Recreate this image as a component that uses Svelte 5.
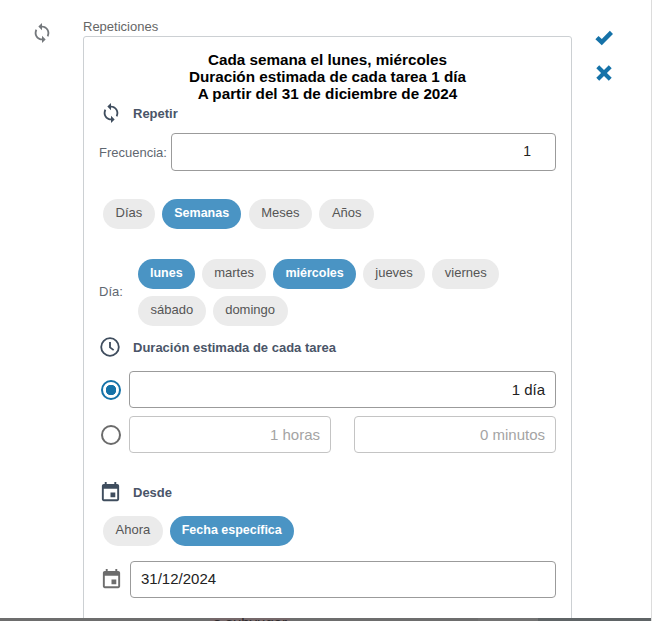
<script>
  const freq = ['Días', 'Semanas', 'Meses', 'Años'];
  const days = ['lunes', 'martes', 'miércoles', 'jueves', 'viernes', 'sábado', 'domingo'];
  const freqOn = 'Semanas';
  const daysOn = ['lunes', 'miércoles'];
  const syncPath = 'M12 4V1L8 5l4 4V6c3.31 0 6 2.69 6 6 0 1.01-.25 1.97-.7 2.8l1.46 1.46C19.54 15.03 20 13.57 20 12c0-4.42-3.58-8-8-8zm0 14c-3.31 0-6-2.69-6-6 0-1.01.25-1.97.7-2.8L5.24 7.74C4.46 8.97 4 10.43 4 12c0 4.42 3.58 8 8 8v3l4-4-4-4v3z';
  const calPath = 'M17 12h-5v5h5v-5zM16 1v2H8V1H6v2H5c-1.11 0-1.99.9-1.99 2L3 19c0 1.1.89 2 2 2h14c1.1 0 2-.9 2-2V5c0-1.1-.9-2-2-2h-1V1h-2zm3 18H5V8h14v11z';
</script>

<div class="page">
  <div class="side">
    <svg class="sync-side" viewBox="0 0 24 24"><path d={syncPath} /></svg>
  </div>

  <div class="main">
    <div class="label">Repeticiones</div>
    <div class="card">
      <div class="summary">
        <div>Cada semana el lunes, miércoles</div>
        <div>Duración estimada de cada tarea 1 día</div>
        <div>A partir del 31 de diciembre de 2024</div>
      </div>

      <div class="head repeat">
        <svg class="ico" viewBox="0 0 24 24"><path d={syncPath} /></svg>
        <span>Repetir</span>
      </div>
      <div class="row-freq">
        <span class="lbl">Frecuencia:</span>
        <div class="input right grow"><span class="one">1</span></div>
      </div>

      <div class="chips freq">
        {#each freq as f}
          <span class="chip" class:on={f === freqOn}>{f}</span>
        {/each}
      </div>

      <div class="row-days">
        <span class="lbl">Día:</span>
        <div class="chips wrap">
          {#each days as d}
            <span class="chip" class:on={daysOn.includes(d)}>{d}</span>
          {/each}
        </div>
      </div>

      <div class="head duration">
        <svg class="clock" viewBox="0 0 24 24" fill="none">
          <circle cx="12" cy="12" r="9.6" />
          <path d="M12 6.5V12.4L16 15.4" />
        </svg>
        <span>Duración estimada de cada tarea</span>
      </div>
      <div class="row-radio">
        <span class="radio on"></span>
        <div class="input right grow">1 día</div>
      </div>
      <div class="row-radio second">
        <span class="radio"></span>
        <div class="input right grow off">1 horas</div>
        <div class="input right grow off">0 minutos</div>
      </div>

      <div class="head since">
        <svg class="ico cal" viewBox="0 0 24 24"><path d={calPath} /></svg>
        <span>Desde</span>
      </div>
      <div class="chips from">
        <span class="chip">Ahora</span>
        <span class="chip on">Fecha específica</span>
      </div>
      <div class="row-date">
        <svg class="cal-grey" viewBox="0 0 24 24"><path d={calPath} /></svg>
        <div class="input grow">31/12/2024</div>
      </div>
    </div>
  </div>

  <div class="actions">
    <svg viewBox="0 0 24 24"><path d="M2.6 13.4 6 9.8l3.6 3.4L18.4 4.2l3.4 3.5L9.6 19.8z" /></svg>
    <svg viewBox="0 0 24 24"><path d="M6.8 3.6 12 8.8l5.2-5.2 3.2 3.2-5.2 5.2 5.2 5.2-3.2 3.2-5.2-5.2-5.2 5.2-3.2-3.2 5.2-5.2-5.2-5.2z" /></svg>
  </div>

  <div class="strip">
    <span class="seg a"></span>
    <span class="seg peek">o subyugar</span>
    <span class="seg b"></span>
    <span class="seg c"></span>
    <span class="seg d"></span>
  </div>
</div>

<style>
  :global(body) { margin: 0; background: #fff; }
  .page {
    position: relative;
    box-sizing: border-box;
    width: 652px;
    height: 621px;
    overflow: hidden;
    display: flex;
    border-right: 1px solid #dcdcdc;
    font-family: "Liberation Sans", Arial, sans-serif;
    font-size: 15px;
    color: #222;
  }
  .side { width: 83px; flex: none; }
  .sync-side { display: block; width: 22px; height: 22px; margin: 22px 0 0 31px; fill: #74787c; }
  .main { width: 489px; flex: none; padding-top: 19px; }
  .label { font-size: 13px; line-height: 16px; color: #666; height: 17px; }
  .card {
    box-sizing: border-box;
    height: 640px;
    border: 1px solid #ccd0d3;
    border-radius: 3px;
    padding: 14px 15px 0 15px;
  }
  .summary { font-weight: 700; font-size: 15.25px; line-height: 17px; color: #000; text-align: center; }
  .head { display: flex; align-items: center; font-weight: 700; font-size: 13px; color: #4a5568; }
  .head .ico { width: 22px; height: 22px; fill: #3f4d5e; margin-right: 11px; flex: none; }
  .repeat { margin: -1px 0 0 1px; height: 24px; }
  .row-freq { display: flex; align-items: center; margin-top: 8px; }
  .lbl { font-size: 13px; color: #5f6771; }
  .row-freq .lbl { margin-right: 4px; }
  .input {
    box-sizing: border-box;
    height: 37px;
    border: 1px solid #9b9b9b;
    border-radius: 4px;
    padding: 0 10px;
    display: flex;
    align-items: center;
    font-size: 15px;
    color: #222;
  }
  .row-freq .input { height: 38px; }
  .right { justify-content: flex-end; }
  .grow { flex: 1 1 0; min-width: 0; }
  .one { margin-right: 14px; margin-bottom: 3px; font-size: 14px; }
  .input.off { border-color: #c4c4c4; color: #a4a4a4; }
  .chips { display: flex; gap: 7px; }
  .chips.wrap { flex-wrap: wrap; row-gap: 7px; width: 405px; }
  .chip {
    box-sizing: border-box;
    height: 30px;
    line-height: 28px;
    padding: 0 12.5px;
    border-radius: 15px;
    background: #ebebeb;
    color: #555;
    font-size: 13px;
  }
  .chip.on { background: #4a94c4; color: #fff; font-weight: 700; font-size: 12.5px; padding: 0 12px; }
  .chips.freq { margin: 28px 0 0 4px; gap: 7.5px; }
  .row-days { display: flex; align-items: center; margin-top: 30px; }
  .row-days .lbl { width: 39px; flex: none; padding-bottom: 2px; }
  .duration { margin-top: 10px; height: 22px; }
  .clock { width: 22px; height: 22px; margin-right: 12px; flex: none; }
  .clock circle, .clock path { stroke: #3f4d5e; stroke-width: 2; }
  .row-radio { display: flex; align-items: center; gap: 8px; margin-top: 13px; }
  .row-radio.second { margin-top: 8px; }
  .row-radio.second .input:last-child { margin-left: 15px; }
  .radio {
    box-sizing: border-box;
    width: 20px;
    height: 20px;
    flex: none;
    margin-left: 2px;
    border: 2px solid #6b6b6b;
    border-radius: 50%;
    background: #fff;
  }
  .radio.on { border-color: #1572a8; background: radial-gradient(circle, #1572a8 0 5px, #fff 5.5px); }
  .since { margin-top: 25px; height: 28px; }
  .since .ico { width: 23px; height: 23px; margin-right: 11px; }
  .chips.from { margin: 10px 0 0 4px; }
  .row-date { display: flex; align-items: center; margin-top: 15px; }
  .row-date .input { padding-bottom: 2px; }
  .cal-grey { width: 23px; height: 23px; fill: #6d6d6d; margin: 0 7px 0 1px; flex: none; }
  .actions { display: flex; flex-direction: column; align-items: flex-start; gap: 13px; padding: 27px 0 0 21px; }
  .actions svg { display: block; width: 22px; height: 22px; fill: #1572a8; }
  .strip { position: absolute; left: 0; right: -1px; bottom: 0; height: 3px; display: flex; overflow: hidden; background: #6d6d6d; }
  .seg { display: block; height: 3px; flex: none; }
  .a { width: 210px; }
  .peek { width: 80px; text-align: center; font-size: 15px; line-height: 3px; padding-top: 3px; box-sizing: border-box; overflow: hidden; background: #75686a; color: #2e2a2c; white-space: nowrap; }
  .b { width: 188px; }
  .c { width: 60px; background: #727272; }
  .d { width: 114px; background: #5f6466; }
</style>
